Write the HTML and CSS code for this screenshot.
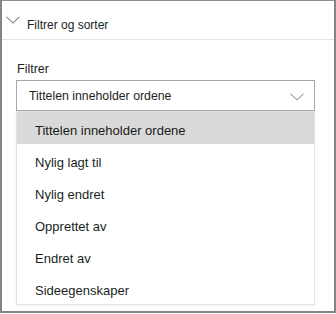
FILE: index.html
```html
<!DOCTYPE html>
<html lang="no">
<head>
<meta charset="utf-8">
<title>Filtrer og sorter</title>
<link rel="stylesheet" href="styles.css">
</head>
<body>
<div class="frame">
  <div class="header">
    <svg class="hchev" width="14" height="8" viewBox="0 0 14 8"><path d="M0.5 0.8 L7 7 L13.5 0.8" fill="none" stroke="#8a8a8a" stroke-width="1.1"/></svg>
    <span class="htitle">Filtrer og sorter</span>
  </div>
  <div class="body">
    <div class="label">Filtrer</div>
    <div class="dropdown">
      <span class="dtext">Tittelen inneholder ordene</span>
      <svg class="dchev" width="14" height="8" viewBox="0 0 14 8"><path d="M0.5 0.8 L7 6.8 L13.5 0.8" fill="none" stroke="#9a9a9a" stroke-width="1.1"/></svg>
    </div>
    <ul class="list">
      <li class="item selected">Tittelen inneholder ordene</li>
      <li class="item">Nylig lagt til</li>
      <li class="item">Nylig endret</li>
      <li class="item">Opprettet av</li>
      <li class="item">Endret av</li>
      <li class="item">Sideegenskaper</li>
    </ul>
  </div>
</div>
</body>
</html>
```

FILE: styles.css
```css
html, body {
  margin: 0;
  padding: 0;
  background: #ffffff;
}
body {
  width: 336px;
  height: 314px;
  font-family: "Liberation Sans", Arial, sans-serif;
  color: #252423;
}
.frame {
  box-sizing: border-box;
  width: 336px;
  height: 313px;
  border: 2px solid #858585;
  border-top: 1px solid #8f8f8f;
  background: #fff;
}
.header {
  height: 38px;
  border-bottom: 1px solid #e3e3e3;
  display: flex;
  align-items: flex-start;
}
.hchev {
  margin-left: 4px;
  margin-top: 15px;
  flex: none;
}
.htitle {
  margin-left: 7px;
  margin-top: 17px;
  font-size: 12px;
  line-height: 14px;
  color: #201f1e;
}
.body {
  padding: 22px 0 0 14px;
}
.label {
  margin-left: 1px;
  font-size: 12.5px;
  line-height: 15px;
  height: 15px;
  margin-bottom: 3px;
  color: #252423;
}
.dropdown {
  box-sizing: border-box;
  width: 299px;
  height: 31px;
  border: 1px solid #a8a8a8;
  display: flex;
  align-items: flex-start;
  justify-content: space-between;
}
.dtext {
  margin-left: 12px;
  padding-top: 2px;
  font-size: 12.3px;
  line-height: 27px;
  color: #201f1e;
}
.dchev {
  margin-right: 10px;
  margin-top: 12px;
}
.list {
  list-style: none;
  margin: 0;
  padding: 0;
  box-sizing: border-box;
  width: 299px;
  border: 1px solid #e3e3e3;
  box-shadow: 0 1px 2px rgba(0,0,0,0.06);
}
.item {
  box-sizing: border-box;
  height: 32px;
  padding: 6px 0 0 18px;
  font-size: 13px;
  line-height: 26px;
  color: #201f1e;
}
.item.selected {
  background: #dadada;
  color: #1b1a19;
}
```
